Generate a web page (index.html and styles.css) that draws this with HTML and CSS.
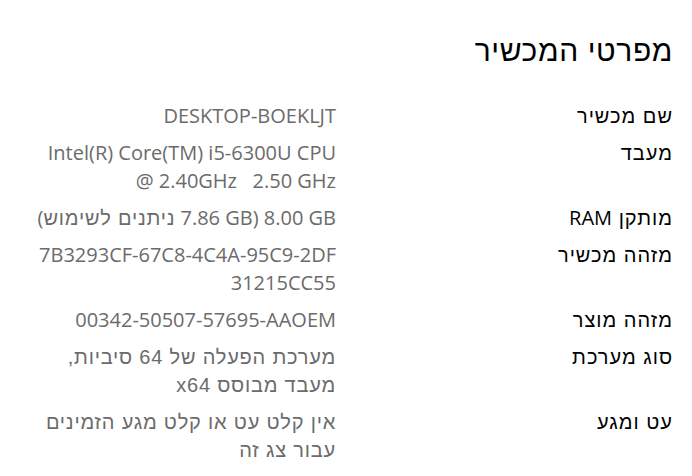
FILE: index.html
```html
<!DOCTYPE html>
<html lang="he" dir="rtl">
<head>
<meta charset="utf-8">
<link rel="stylesheet" href="styles.css">
</head>
<body>
<main class="page">
  <h1 class="title">מפרטי המכשיר</h1>
  <dl class="specs">
    <dt>שם מכשיר</dt>
    <dd dir="ltr">DESKTOP-BOEKLJT</dd>
    <dt>מעבד</dt>
    <dd dir="ltr">Intel(R) Core(TM) i5-6300U CPU @ 2.40GHz&nbsp;&nbsp; 2.50 GHz</dd>
    <dt>מותקן <span class="lat">RAM</span></dt>
    <dd><bdi>8.00 GB</bdi> (<bdi>7.86 GB</bdi> <span class="he">ניתנים לשימוש</span>)</dd>
    <dt>מזהה מכשיר</dt>
    <dd dir="ltr" class="break">7B3293CF-67C8-4C4A-95C9-2DF31215CC55</dd>
    <dt>מזהה מוצר</dt>
    <dd dir="ltr">00342-50507-57695-AAOEM</dd>
    <dt>סוג מערכת</dt>
    <dd class="he">מערכת הפעלה של 64 סיביות, מעבד מבוסס x64</dd>
    <dt>עט ומגע</dt>
    <dd class="he">אין קלט עט או קלט מגע הזמינים עבור צג זה</dd>
  </dl>
</main>
</body>
</html>
```
FILE: styles.css
```css
html, body {
  margin: 0;
  padding: 0;
  background: #ffffff;
}
body {
  font-family: "Open Sans", "Liberation Sans", sans-serif;
  color: #000;
}
.page {
  padding: 31px 19px 0 30px;
}
.title {
  margin: 0 0 31px 0;
  font-family: "Liberation Sans", "Open Sans", sans-serif;
  font-size: 30px;
  font-weight: 400;
  line-height: 40px;
  letter-spacing: 0.6px;
}
.specs {
  margin: 0;
  display: grid;
  grid-template-columns: 300px 306px;
  column-gap: 37px;
  row-gap: 9px;
  font-size: 20px;
  line-height: 28px;
}
.specs dt {
  margin: 0;
  color: #000;
  font-family: "Liberation Sans", "Open Sans", sans-serif;
  letter-spacing: 1px;
}
.specs dd {
  margin: 0;
  color: #6b6b6b;
  text-align: right;
}
.specs dd.break {
  word-break: break-all;
}
.he {
  font-family: "Liberation Sans", "Open Sans", sans-serif;
  letter-spacing: 0.8px;
}
span.he {
  line-height: 26px;
}
.lat {
  font-family: "Open Sans", "Liberation Sans", sans-serif;
  letter-spacing: 0;
  line-height: 26px;
}
```
